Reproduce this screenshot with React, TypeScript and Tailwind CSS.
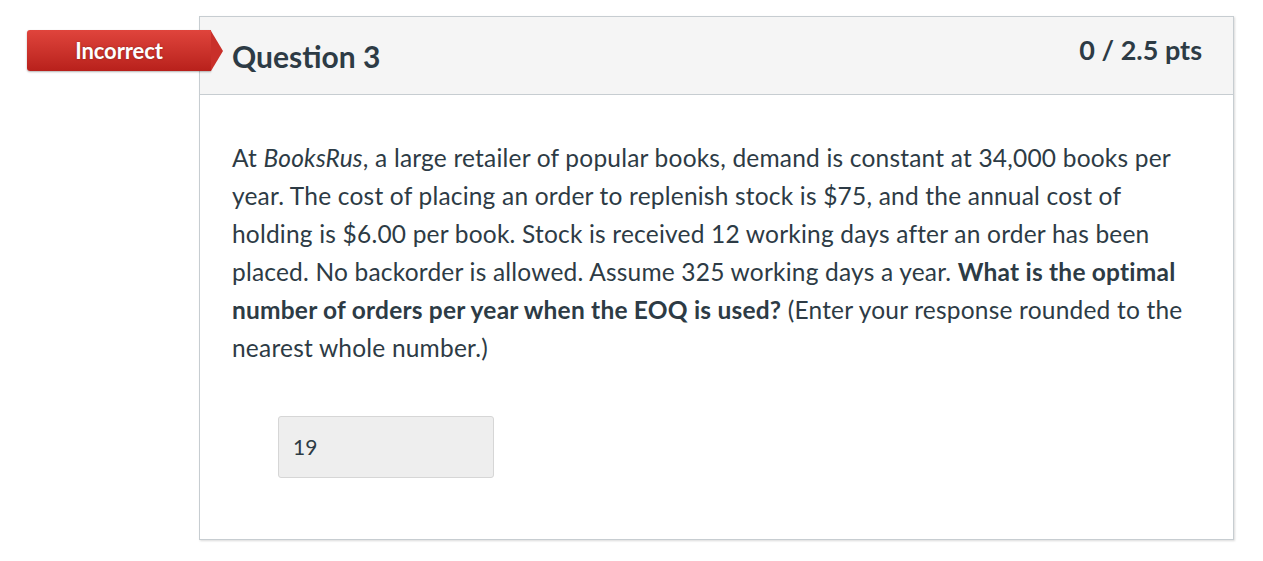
import React from 'react';

const App = () => {
    return (
        <div className="min-h-[561px] bg-white pt-[16px] pl-[199px] font-['Lato','Liberation_Sans',sans-serif] text-[#2d3b45]">
            <div className="relative w-[1035px] h-[524px] border border-[#c7cdd1] shadow-[1px_1px_2px_rgba(0,0,0,0.15)] bg-white">

                {/* Incorrect ribbon */}
                <div className="absolute left-[-173px] top-[13px] flex items-center">
                    <div className="w-[184px] h-[41px] rounded-l-[3px] bg-gradient-to-b from-[#e0443c] to-[#b8201b] flex items-center justify-center shadow-[0_1px_2px_rgba(0,0,0,0.3)]">
                        <span className="text-white font-bold text-[22px] tracking-[-0.1px] [text-shadow:0_0_2px_rgba(0,0,0,0.35)]">Incorrect</span>
                    </div>
                    <div className="w-0 h-0 border-y-[20.5px] border-y-transparent border-l-[12px] border-l-[#c9302a]" />
                </div>

                {/* Header */}
                <div className="h-[78px] bg-[#f5f5f5] border-b border-[#c7cdd1] flex items-start justify-between pl-[32px] pr-[31px]">
                    <h2 className="mt-[22px] text-[30px] font-bold leading-[34px] text-[#2d3b45]">Question 3</h2>
                    <div className="mt-[17px] text-[27px] font-bold leading-[32px] text-[#2d3b45]">0 / 2.5 pts</div>
                </div>

                {/* Body */}
                <div className="pl-[32px] pr-[36px] pt-[44px]">
                    <p className="text-[24.5px] leading-[38px] tracking-[0.2px] text-[#2d3b45]">
                        At <em>BooksRus</em>, a large retailer of popular books, demand is constant at 34,000 books per year. The cost of placing an order to replenish stock is $75, and the annual cost of holding is $6.00 per book. Stock is received 12 working days after an order has been placed. No backorder is allowed. Assume 325 working days a year. <strong>What is the optimal number of orders per year when the EOQ is used?</strong> (Enter your response rounded to the nearest whole number.)
                    </p>
                    <div className="mt-[49px] ml-[46px] w-[216px] h-[62px] rounded-[3px] bg-[#eeeeee] border border-[#d6d6d6] flex items-center px-[14px]">
                        <span className="text-[21px] text-[#2d3b45]">19</span>
                    </div>
                </div>
            </div>
        </div>
    );
};

export default App;
